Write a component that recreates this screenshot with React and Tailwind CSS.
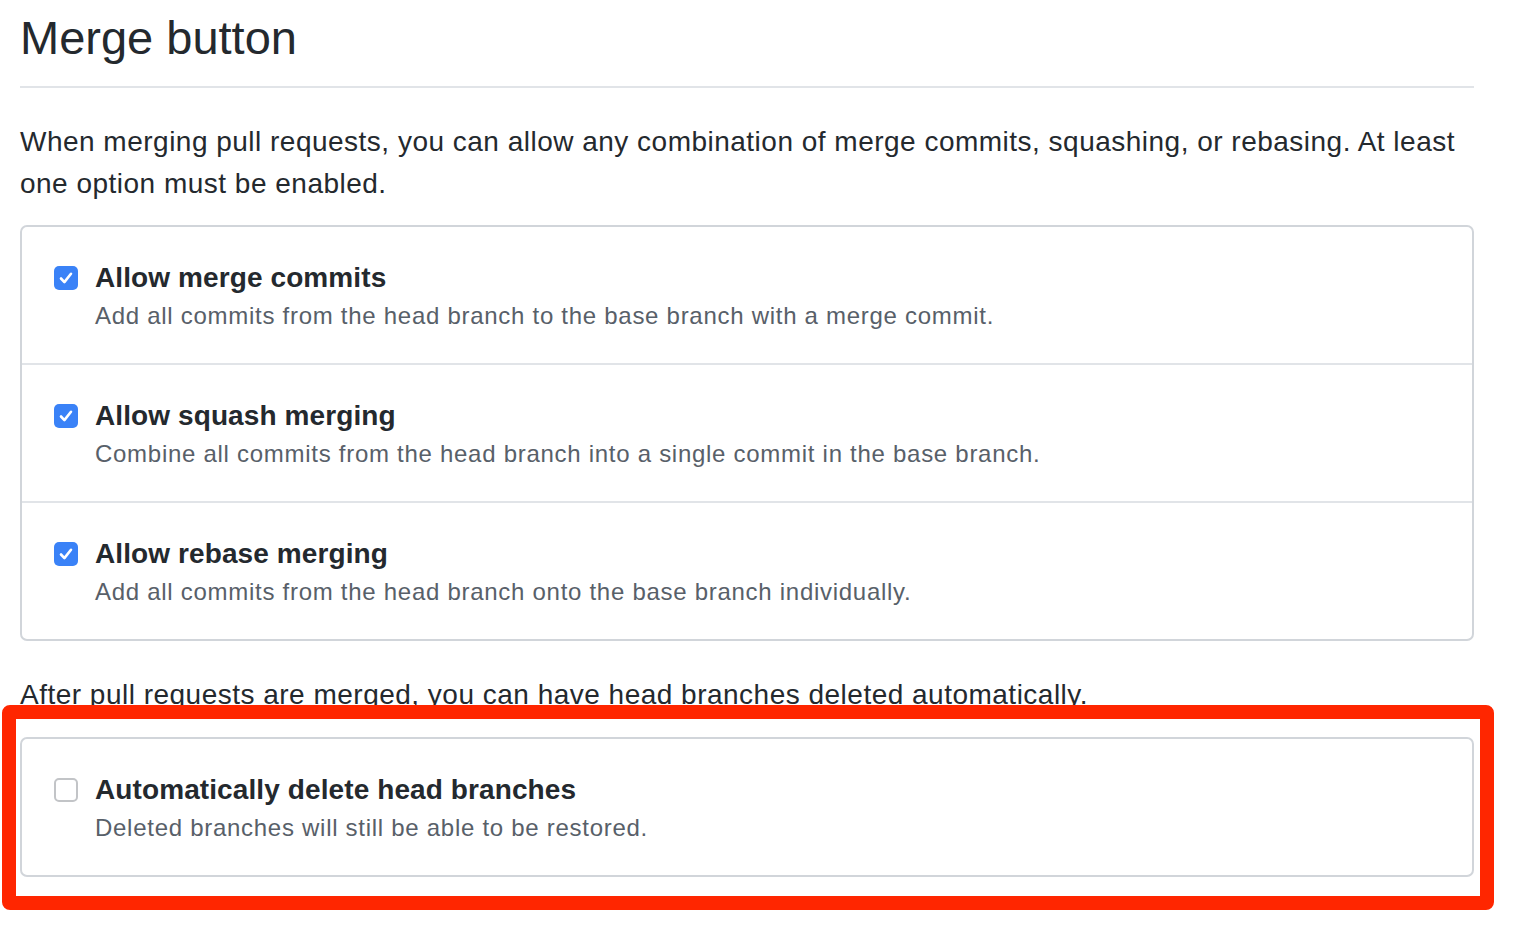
import { useState } from 'react';

// Single merge option row with checkbox, title and description
const OptionRow = ({ title, description, checked, onToggle, last }) => (
  <label
    className={`flex items-start pl-[32px] pr-[32px] pt-[32px] pb-[28px] cursor-pointer ${
      last ? '' : 'border-b-2 border-[#e1e4e8]'
    }`}
  >
    <span className="pt-[7px] mr-[17px] shrink-0">
      {checked ? (
        <span
          onClick={onToggle}
          className="flex items-center justify-center w-[24px] h-[24px] rounded-[5px] bg-[#3a82f7]"
        >
          <svg width="20" height="20" viewBox="0 0 20 20" fill="none">
            <path d="M5 10.5l3.4 3.6L15 5.8" stroke="white" strokeWidth="2.6" strokeLinecap="round" strokeLinejoin="round" />
          </svg>
        </span>
      ) : (
        <span
          onClick={onToggle}
          className="block w-[24px] h-[24px] rounded-[5px] border-2 border-[#c2c4c7] bg-white"
        />
      )}
    </span>
    <span className="flex flex-col">
      <span className="text-[28px] leading-[38px] font-bold text-[#24292e] tracking-[0.1px]">{title}</span>
      <span className="text-[24px] leading-[38px] text-[#586069] tracking-[0.72px]">{description}</span>
    </span>
  </label>
);

const App = () => {
  const [opts, setOpts] = useState({ merge: true, squash: true, rebase: true, del: false });
  const toggle = (k) => setOpts((o) => ({ ...o, [k]: !o[k] }));

  return (
    <div className="relative min-h-[952px] bg-white font-['Liberation_Sans',Arial,sans-serif]">
      <div className="w-[1474px] pl-[20px]">
        {/* Heading */}
        <h2 className="text-[47px] leading-[60px] pt-[8px] pb-[18px] font-normal text-[#24292e] border-b-2 border-[#e1e4e8]">
          Merge button
        </h2>

        <p className="mt-[33px] text-[28px] leading-[42px] text-[#24292e] tracking-[0.49px]">
          When merging pull requests, you can allow any combination of merge commits, squashing, or rebasing. At least
          <br />
          one option must be enabled.
        </p>

        <div className="mt-[20px] border-2 border-[#d1d5da] rounded-[7px]">
          <OptionRow
            title="Allow merge commits"
            description="Add all commits from the head branch to the base branch with a merge commit."
            checked={opts.merge}
            onToggle={() => toggle('merge')}
          />
          <OptionRow
            title="Allow squash merging"
            description="Combine all commits from the head branch into a single commit in the base branch."
            checked={opts.squash}
            onToggle={() => toggle('squash')}
          />
          <OptionRow
            title="Allow rebase merging"
            description="Add all commits from the head branch onto the base branch individually."
            checked={opts.rebase}
            onToggle={() => toggle('rebase')}
            last
          />
        </div>

        <p className="mt-[33px] text-[28px] leading-[42px] text-[#24292e] tracking-[0.49px]">
          After pull requests are merged, you can have head branches deleted automatically.
        </p>

        <div className="mt-[21px] border-2 border-[#d1d5da] rounded-[7px]">
          <OptionRow
            title="Automatically delete head branches"
            description="Deleted branches will still be able to be restored."
            checked={opts.del}
            onToggle={() => toggle('del')}
            last
          />
        </div>
      </div>

      {/* Red highlight annotation */}
      <div className="absolute left-[2px] top-[705px] w-[1492px] h-[205px] border-[14px] border-[#ff2600] rounded-[8px] pointer-events-none" />
    </div>
  );
};

export default App;
